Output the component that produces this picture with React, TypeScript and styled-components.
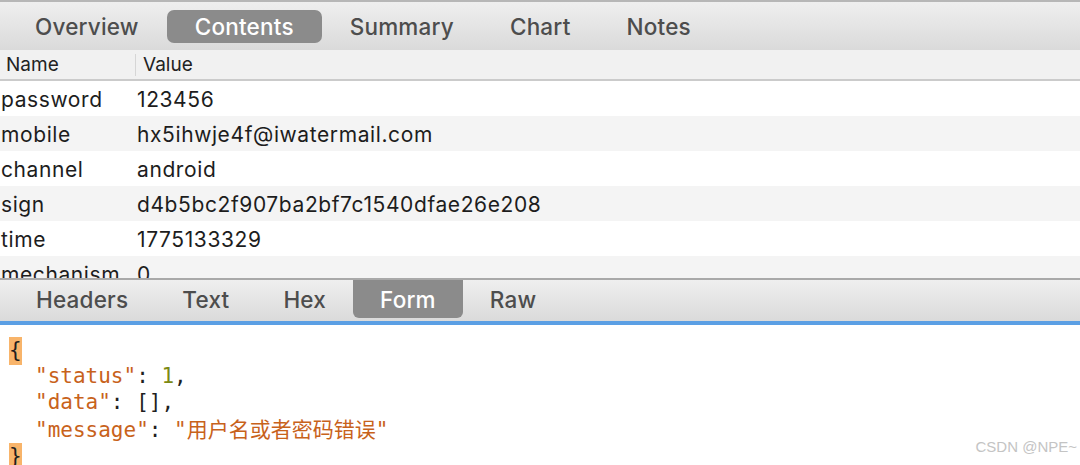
import React from "react";
import styled, { createGlobalStyle } from "styled-components";

const Global = createGlobalStyle`
  html, body { margin: 0; padding: 0; background: #ffffff; }
  body { width: 1080px; height: 465px; overflow: hidden; font-family: "Inter", "Liberation Sans", sans-serif; }
`;

const Page = styled.div`
  width: 1080px;
  height: 465px;
  display: flex;
  flex-direction: column;
  position: relative;
  overflow: hidden;
`;

const TabBar = styled.div<{ $bottom?: boolean }>`
  display: flex;
  flex-shrink: 0;
  align-items: ${(p) => (p.$bottom ? "stretch" : "center")};
  height: ${(p) => (p.$bottom ? "41px" : "48px")};
  padding-left: ${(p) => (p.$bottom ? "9px" : "7px")};
  border-top: 2px solid ${(p) => (p.$bottom ? "#a9a9a9" : "#b7b7b7")};
  background: linear-gradient(#efefef, #dadada);
  border-bottom: ${(p) => (p.$bottom ? "4px solid #5b9fe4" : "none")};
`;

const Tab = styled.div<{ $active?: boolean; $bottom?: boolean }>`
  display: flex;
  align-items: center;
  justify-content: center;
  padding: ${(p) => (p.$bottom ? "0 27px" : "0 28px")};
  height: ${(p) => (p.$bottom ? "auto" : "33px")};
  margin-bottom: ${(p) => (p.$bottom ? "3px" : "0")};
  margin-top: ${(p) => (p.$bottom ? "0" : "1px")};
  border-radius: ${(p) => (p.$bottom ? "0 0 6px 6px" : "7px")};
  background: ${(p) => (p.$active ? "#8b8b8b" : "transparent")};
  color: ${(p) => (p.$active ? "#ffffff" : "#4d4d4d")};
  font-size: 22.5px;
  font-weight: 500;
  letter-spacing: 0.2px;
`;

const Table = styled.div`
  display: flex;
  flex-direction: column;
  flex-shrink: 0;
  height: 228px;
  overflow: hidden;
`;

const HeaderRow = styled.div`
  display: grid;
  grid-template-columns: 135px 1fr;
  height: 29px;
  align-items: center;
  background: #f1f1f1;
  border-bottom: 2px solid #cbcbcb;
  font-size: 19px;
  color: #222;
  flex-shrink: 0;
`;

const HeaderCell = styled.div<{ $sep?: boolean }>`
  padding-left: ${(p) => (p.$sep ? "7px" : "6px")};
  border-left: ${(p) => (p.$sep ? "1px solid #d6d6d6" : "none")};
  height: 22px;
  line-height: 22px;
`;

const Row = styled.div<{ $alt?: boolean }>`
  display: grid;
  grid-template-columns: 136px 1fr;
  height: 35px;
  flex-shrink: 0;
  align-items: center;
  background: ${(p) => (p.$alt ? "#f4f4f4" : "#ffffff")};
  font-size: 21px;
  letter-spacing: 0.6px;
  color: #1d1d1d;
  padding-top: 2px;
  box-sizing: border-box;
`;

const Cell = styled.div`
  padding-left: 1px;
  white-space: nowrap;
`;

const Code = styled.div`
  flex: 1;
  min-height: 0;
  padding: 12px 0 0 9px;
  font-family: "DejaVu Sans Mono", "Liberation Mono", "Noto Sans CJK SC", monospace;
  font-size: 21px;
  line-height: 26px;
  color: #1f1f1f;
`;

const Line = styled.div<{ $indent?: boolean }>`
  white-space: pre;
  padding-left: ${(p) => (p.$indent ? "26px" : "0")};
`;

const Brace = styled.span`
  background: #f8b46a;
  padding: 1px 0 3px;
`;

const Str = styled.span`
  color: #c8621b;
`;

const Num = styled.span`
  color: #7c8a14;
`;

const Cjk = styled.span`
  font-family: "Noto Sans CJK SC", sans-serif;
  font-size: 21px;
`;

const Watermark = styled.div`
  position: absolute;
  right: 3px;
  bottom: 10px;
  font-family: "Liberation Sans", sans-serif;
  font-size: 15px;
  color: #c4c4c4;
  text-shadow: 0 1px 0 #ffffff;
`;

const topTabs = ["Overview", "Contents", "Summary", "Chart", "Notes"];
const bottomTabs = ["Headers", "Text", "Hex", "Form", "Raw"];

const rows: [string, string][] = [
  ["password", "123456"],
  ["mobile", "hx5ihwje4f@iwatermail.com"],
  ["channel", "android"],
  ["sign", "d4b5bc2f907ba2bf7c1540dfae26e208"],
  ["time", "1775133329"],
  ["mechanism", "0"],
];

export default function App() {
  return (
    <Page>
      <Global />
      <TabBar>
        {topTabs.map((t) => (
          <Tab key={t} $active={t === "Contents"}>
            {t}
          </Tab>
        ))}
      </TabBar>
      <Table>
        <HeaderRow>
          <HeaderCell>Name</HeaderCell>
          <HeaderCell $sep>Value</HeaderCell>
        </HeaderRow>
        {rows.map(([k, v], i) => (
          <Row key={k} $alt={i % 2 === 1}>
            <Cell>{k}</Cell>
            <Cell>{v}</Cell>
          </Row>
        ))}
      </Table>
      <TabBar $bottom>
        {bottomTabs.map((t) => (
          <Tab key={t} $bottom $active={t === "Form"}>
            {t}
          </Tab>
        ))}
      </TabBar>
      <Code>
        <Line>
          <Brace>{"{"}</Brace>
        </Line>
        <Line $indent>
          <Str>"status"</Str>: <Num>1</Num>,
        </Line>
        <Line $indent>
          <Str>"data"</Str>: [],
        </Line>
        <Line $indent>
          <Str>"message"</Str>: <Str>"<Cjk>用户名或者密码错误</Cjk>"</Str>
        </Line>
        <Line>
          <Brace>{"}"}</Brace>
        </Line>
      </Code>
      <Watermark>CSDN @NPE~</Watermark>
    </Page>
  );
}
